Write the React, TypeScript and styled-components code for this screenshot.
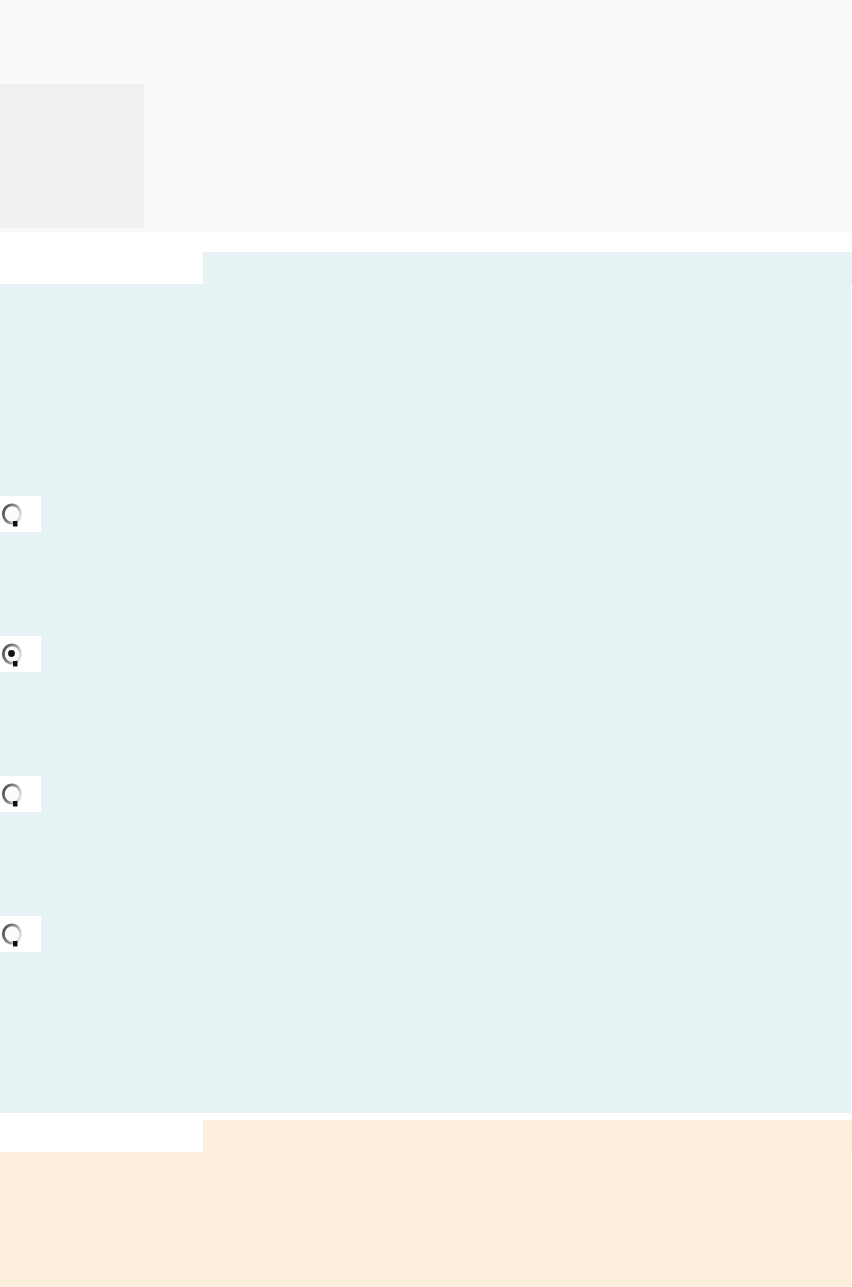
import React from 'react'
import styled, { createGlobalStyle } from 'styled-components'

const GlobalStyle = createGlobalStyle`
  html, body {
    margin: 0;
    padding: 0;
    background: #ffffff;
    font-family: "Liberation Sans", Arial, sans-serif;
  }
`

const Page = styled.div`
  width: 852px;
  display: flex;
  flex-direction: column;
`

const Header = styled.header`
  width: 851px;
  height: 232px;
  box-sizing: border-box;
  padding-top: 84px;
  background: #f7f9fb;
  border-bottom: 4px solid #f8f8f8;
`

const Logo = styled.div`
  width: 144px;
  height: 144px;
  background: #f0f0f0;
`

const Section = styled.section<{ $top: number }>`
  margin-top: ${(p) => p.$top}px;
  display: flex;
  flex-direction: column;
`

const TabRow = styled.div<{ $color: string }>`
  display: flex;
  height: 32px;

  & > div:last-child {
    flex: 1;
    background: ${(p) => p.$color};
  }
`

const TabLabel = styled.div`
  width: 203px;
  background: #ffffff;
`

const Panel = styled.div<{ $color: string; $height: number; $pad: number }>`
  width: 851px;
  min-height: ${(p) => p.$height}px;
  box-sizing: border-box;
  padding-top: ${(p) => p.$pad}px;
  background: ${(p) => p.$color};
  display: flex;
  flex-direction: column;
  gap: 104px;
`

const Option = styled.label`
  width: 41px;
  height: 36px;
  background: #ffffff;
  display: flex;
  align-items: flex-start;
  padding: 6px 0 0 1px;
  box-sizing: border-box;
`

const RadioMark = ({ checked }: { checked?: boolean }): JSX.Element => {
  const id = checked ? 'rg-on' : 'rg-off'
  return (
    <svg width="24" height="28" viewBox="0 0 24 28">
      <defs>
        <linearGradient id={id} x1="0" y1="0.2" x2="1" y2="0.6">
          <stop offset="0" stopColor="#4f4f4f" />
          <stop offset="0.5" stopColor="#8c8c8c" />
          <stop offset="1" stopColor="#e2e2e2" />
        </linearGradient>
      </defs>
      <ellipse cx="11" cy="12" rx="8.6" ry="9.2" fill="#fcfcfc" stroke={`url(#${id})`} strokeWidth="2.8" />
      <rect x="12" y="19" width="4.5" height="5.5" fill="#111111" />
      {checked && <circle cx="10.5" cy="11.5" r="3.4" fill="#111111" />}
    </svg>
  )
}

const options = [false, true, false, false]

const App = (): JSX.Element => {
  return (
    <>
      <GlobalStyle />
      <Page>
        <Header>
          <Logo />
        </Header>
        <Section $top={20}>
          <TabRow $color="#e7f2f5">
            <TabLabel />
            <div />
          </TabRow>
          <Panel $color="#e7f2f5" $height={829} $pad={212}>
            {options.map((checked, i) => (
              <Option key={i}>
                <RadioMark checked={checked} />
              </Option>
            ))}
          </Panel>
        </Section>
        <Section $top={7}>
          <TabRow $color="#fcefdc">
            <TabLabel />
            <div />
          </TabRow>
          <Panel $color="#fcefdc" $height={135} $pad={0} />
        </Section>
      </Page>
    </>
  )
}

export default App
